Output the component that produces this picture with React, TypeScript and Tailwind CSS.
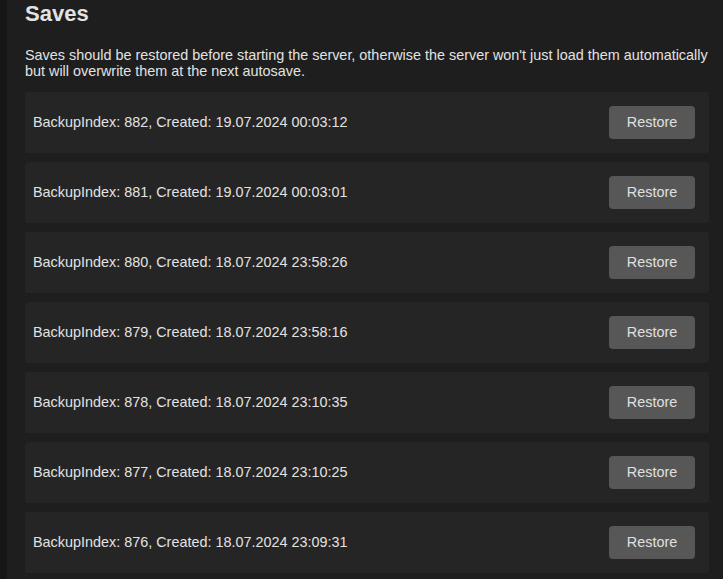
const saves = [
  { index: 882, created: "19.07.2024 00:03:12" },
  { index: 881, created: "19.07.2024 00:03:01" },
  { index: 880, created: "18.07.2024 23:58:26" },
  { index: 879, created: "18.07.2024 23:58:16" },
  { index: 878, created: "18.07.2024 23:10:35" },
  { index: 877, created: "18.07.2024 23:10:25" },
  { index: 876, created: "18.07.2024 23:09:31" },
];

export default function App() {
  return (
    <div className="flex min-h-screen font-['Liberation_Sans',Arial,sans-serif] text-[#e2e2e2]">
      {/* sidebar edge */}
      <div className="w-[7px] shrink-0 bg-[#161616]" />

      <main className="flex-1 bg-[#1e1e1e] pl-[18px] pr-[14px]">
        <h1 className="pt-px text-[22px] font-bold leading-[25px]">Saves</h1>
        <p className="mt-[21px] text-[14.4px] leading-[16px]">
          Saves should be restored before starting the server, otherwise the server won't just load them
          automatically but will overwrite them at the next autosave.
        </p>

        <div className="mt-[13px] flex flex-col gap-[9px] pb-[7px]">
          {saves.map((s) => (
            <div
              key={s.index}
              className="flex h-[61px] items-center justify-between rounded-[3px] bg-[#252525] pl-[8px] pr-[14px]"
            >
              <span className="text-[14.4px]">
                BackupIndex: {s.index}, Created: {s.created}
              </span>
              <button className="h-[33px] w-[86px] rounded-[4px] bg-[#575757] text-[14.4px] text-[#e0e0e0]">
                Restore
              </button>
            </div>
          ))}
        </div>
      </main>
    </div>
  );
}
